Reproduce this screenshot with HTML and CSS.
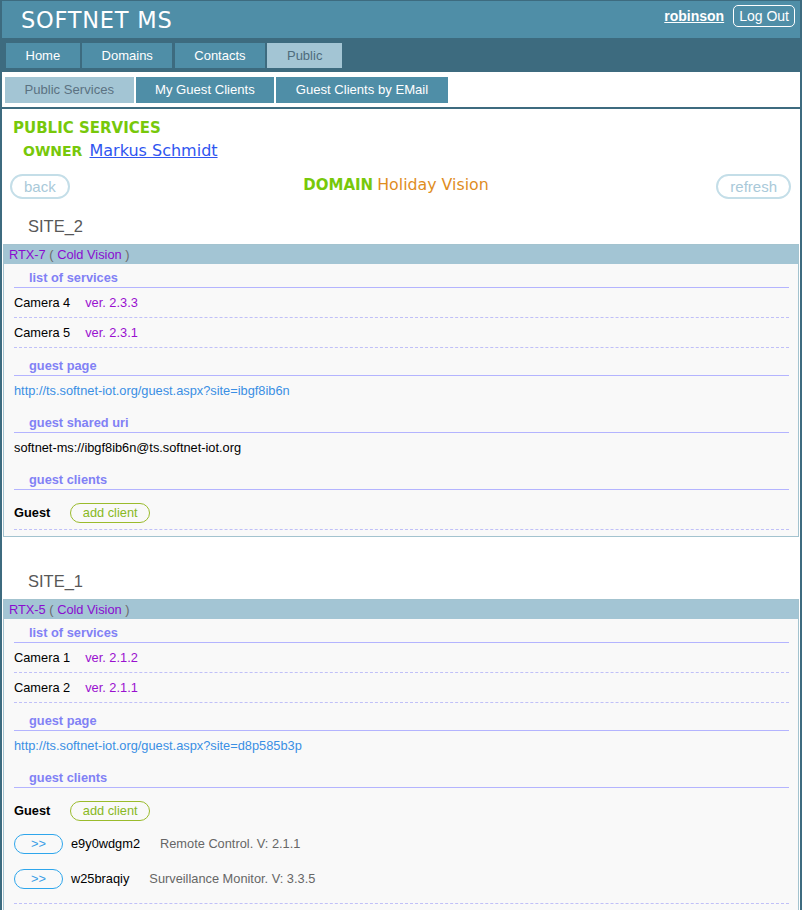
FILE: index.html
```html
<!DOCTYPE html>
<html lang="en">
<head>
<meta charset="utf-8">
<title>SOFTNET MS - Public Services</title>
<link rel="stylesheet" href="styles.css">
</head>
<body>
<div class="page">
  <header class="topbar">
    <div class="brand">SOFTNET MS</div>
    <div class="user">
      <a class="username" href="#">robinson</a>
      <button class="logout" type="button">Log Out</button>
    </div>
  </header>
  <nav class="mainnav">
    <a class="tab" href="#">Home</a>
    <a class="tab" href="#">Domains</a>
    <a class="tab" href="#">Contacts</a>
    <a class="tab active" href="#">Public</a>
  </nav>
  <nav class="subnav">
    <a class="subtab active" href="#">Public Services</a>
    <a class="subtab" href="#">My Guest Clients</a>
    <a class="subtab" href="#">Guest Clients by EMail</a>
  </nav>
  <main class="content">
    <div class="intro">
      <div class="page-title">PUBLIC SERVICES</div>
      <div class="owner"><span class="owner-label">OWNER</span> <a class="owner-link" href="#">Markus Schmidt</a></div>
    </div>
    <div class="domain-row">
      <button class="pill" type="button">back</button>
      <div class="domain"><span class="domain-label">DOMAIN</span> <span class="domain-name">Holiday Vision</span></div>
      <button class="pill" type="button">refresh</button>
    </div>

    <section class="site">
      <h2 class="site-title">SITE_2</h2>
      <div class="card">
        <div class="card-head"><span class="dev">RTX-7</span> <span class="paren">(</span> <span class="dev">Cold Vision</span> <span class="paren">)</span></div>
        <div class="card-body">
          <div class="sec-title first">list of services</div>
          <div class="svc"><span class="svc-name">Camera 4</span><span class="ver">ver. 2.3.3</span></div>
          <div class="svc"><span class="svc-name">Camera 5</span><span class="ver">ver. 2.3.1</span></div>
          <div class="sec-title">guest page</div>
          <div class="val link">http://ts.softnet-iot.org/guest.aspx?site=ibgf8ib6n</div>
          <div class="sec-title">guest shared uri</div>
          <div class="val">softnet-ms://ibgf8ib6n@ts.softnet-iot.org</div>
          <div class="sec-title">guest clients</div>
          <div class="guests">
            <div class="guest-line"><span class="guest-label">Guest</span><button class="add-btn" type="button">add client</button></div>
          </div>
        </div>
      </div>
    </section>

    <section class="site">
      <h2 class="site-title">SITE_1</h2>
      <div class="card">
        <div class="card-head"><span class="dev">RTX-5</span> <span class="paren">(</span> <span class="dev">Cold Vision</span> <span class="paren">)</span></div>
        <div class="card-body">
          <div class="sec-title first">list of services</div>
          <div class="svc"><span class="svc-name">Camera 1</span><span class="ver">ver. 2.1.2</span></div>
          <div class="svc"><span class="svc-name">Camera 2</span><span class="ver">ver. 2.1.1</span></div>
          <div class="sec-title">guest page</div>
          <div class="val link">http://ts.softnet-iot.org/guest.aspx?site=d8p585b3p</div>
          <div class="sec-title">guest clients</div>
          <div class="guests">
            <div class="guest-line"><span class="guest-label">Guest</span><button class="add-btn" type="button">add client</button></div>
            <div class="clients">
              <div class="client"><button class="go-btn" type="button">&gt;&gt;</button><span class="client-id">e9y0wdgm2</span><span class="client-app">Remote Control. V: 2.1.1</span></div>
              <div class="client"><button class="go-btn" type="button">&gt;&gt;</button><span class="client-id">w25braqiy</span><span class="client-app">Surveillance Monitor. V: 3.3.5</span></div>
            </div>
          </div>
        </div>
      </div>
    </section>
  </main>
</div>
</body>
</html>
```
FILE: styles.css
```css
html, body {
  margin: 0;
  padding: 0;
  background: #ffffff;
  overflow: hidden;
}

body {
  font-family: "Liberation Sans", Arial, sans-serif;
  font-size: 12.8px;
  color: #000;
}

button {
  font-family: "Liberation Sans", Arial, sans-serif;
  cursor: pointer;
  background: transparent;
  margin: 0;
}

.page {
  border-style: solid;
  border-color: #3d6b7f;
  border-width: 1px 2px 0 2px;
  min-height: 909px;
  box-sizing: border-box;
}

/* ---------- top bar ---------- */
.topbar {
  height: 37px;
  background: #4f8ea7;
  display: flex;
  align-items: center;
  justify-content: space-between;
  padding: 0 5px 0 19px;
}

.brand {
  font-family: "DejaVu Sans", Verdana, sans-serif;
  font-size: 22.5px;
  color: #ffffff;
  letter-spacing: 0.75px;
  margin-top: 1px;
}

.user {
  align-self: flex-start;
  margin-top: 4px;
  display: flex;
  align-items: baseline;
  gap: 9px;
}

.username {
  color: #ffffff;
  font-weight: bold;
  font-size: 14px;
  text-decoration: underline;
}

.logout {
  height: 22px;
  border: 1px solid #ffffff;
  border-radius: 5px;
  color: #ffffff;
  font-size: 14px;
  padding: 0 5px;
  line-height: 20px;
}

/* ---------- main nav ---------- */
.mainnav {
  background: #3d6b7f;
  height: 34px;
  box-sizing: border-box;
  padding: 5px 0 4px 4px;
  display: flex;
  gap: 2.4px;
}

.tab {
  display: block;
  height: 25px;
  line-height: 25px;
  padding: 0 19.5px;
  background: #4f8ea7;
  color: #ffffff;
  font-size: 13px;
  text-decoration: none;
}

.tab.active {
  background: #a3c5d4;
  color: #4e6c7c;
}

/* ---------- sub nav ---------- */
.subnav {
  height: 37px;
  box-sizing: border-box;
  padding: 5px 0 0 3px;
  display: flex;
  gap: 2px;
  border-bottom: 2px solid #3d6b7f;
  background: #ffffff;
}

.subtab {
  display: block;
  height: 26px;
  line-height: 26px;
  padding: 0 19.5px;
  background: #4f8ea7;
  color: #ffffff;
  font-size: 13.1px;
  text-decoration: none;
}

.subtab.active {
  background: #a3c5d4;
  color: #5b7282;
}

/* ---------- content ---------- */
.content {
  padding: 0 1px;
}

.intro {
  padding: 10px 0 0 10px;
  font-family: "DejaVu Sans", Verdana, sans-serif;
}

.page-title {
  line-height: 18px;
  font-size: 15px;
  font-weight: bold;
  color: #77c80a;
}

.owner {
  margin-top: 4px;
  line-height: 20px;
  padding-left: 10px;
}

.owner-label {
  font-size: 14px;
  font-weight: bold;
  color: #77c80a;
}

.owner-link {
  margin-left: 3px;
  font-size: 16px;
  color: #2f55f0;
  text-decoration: underline;
}

.domain-row {
  margin: 12px 8px 0 7px;
  display: flex;
  align-items: center;
  justify-content: space-between;
}

.pill {
  height: 25px;
  border: 2px solid #c4dee8;
  border-radius: 13px;
  color: #a9c9d9;
  font-size: 15px;
  padding: 0 12px;
  line-height: 21px;
}

.domain {
  font-family: "DejaVu Sans", Verdana, sans-serif;
  margin-top: -4px;
  margin-left: 6px;
}

.domain-label {
  font-size: 15px;
  font-weight: bold;
  color: #77c80a;
}

.domain-name {
  font-size: 15.8px;
  color: #e08d1e;
}

/* ---------- site ---------- */
.site {
  margin-top: 17px;
}

.site + .site {
  margin-top: 34px;
}

.site-title {
  margin: 0 0 8px 0;
  padding-left: 25px;
  font-size: 16.5px;
  font-weight: normal;
  line-height: 20px;
  color: #585858;
}

.card {
  border: 1px solid #a3c3cf;
  background: #f9f9f9;
}

.card-head {
  height: 19px;
  line-height: 19px;
  background: #a3c5d4;
  padding-left: 5px;
  font-size: 12.8px;
}

.dev {
  color: #8a0bd0;
}

.paren {
  color: #6a6a6a;
}

.card-body {
  padding: 0 9px 6px 10px;
}

.sec-title {
  margin-top: 8px;
  line-height: 19px;
  padding-left: 15px;
  border-bottom: 1px solid #b4b4ff;
  font-weight: bold;
  color: #8181f5;
}

.sec-title.first {
  margin-top: 4px;
}

.svc {
  height: 29px;
  display: flex;
  align-items: center;
  border-bottom: 1px dashed #c0c0f8;
}

.svc-name {
  margin-right: 15px;
}

.ver {
  color: #9a10d0;
}

.val {
  height: 29px;
  line-height: 29px;
}

.val.link {
  color: #3a8fe4;
}

.guests {
  padding: 12px 0 6px 0;
  border-bottom: 1px dashed #c0c0f8;
}

.guest-line {
  height: 21px;
  display: flex;
  align-items: center;
}

.guest-label {
  font-weight: bold;
  margin-right: 20px;
}

.add-btn {
  height: 20px;
  border: 1px solid #9abb2c;
  border-radius: 10px;
  color: #88b824;
  font-size: 12.8px;
  padding: 0 11.5px;
  line-height: 18px;
}

.clients {
  padding-bottom: 8px;
}

.client {
  height: 21px;
  margin-top: 12px;
  display: flex;
  align-items: center;
}

.client + .client {
  margin-top: 14px;
}

.go-btn {
  height: 20px;
  width: 49px;
  border: 1px solid #2ea6ec;
  border-radius: 10px;
  color: #3a9ee6;
  font-size: 12.8px;
  padding: 0;
  line-height: 18px;
  margin-right: 8px;
}

.client-id {
  margin-right: 20px;
}

.client-app {
  color: #666666;
}
```
